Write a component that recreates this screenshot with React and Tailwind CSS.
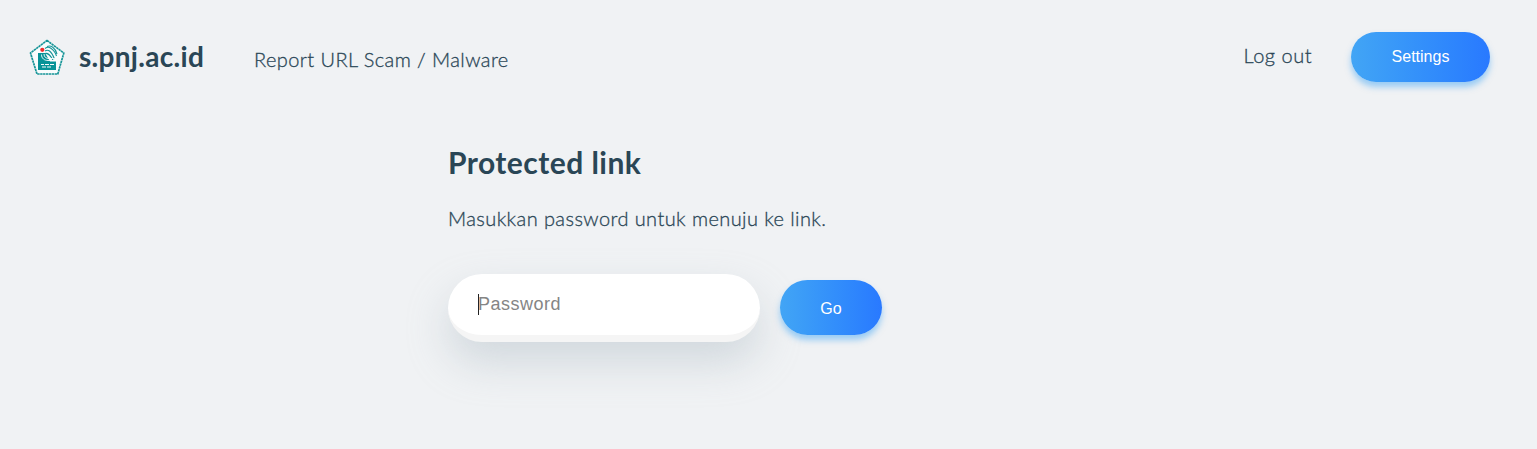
function Logo() {
  return (
    <svg viewBox="0 0 36 36" className="h-9 w-9 shrink-0" fill="none">
      <path d="M18 1.5 34.800 14 28.800 35H8L1.500 14Z" fill="#f8fcfc" stroke="#159497" strokeWidth="1.7" strokeDasharray="2.4 0.5" strokeLinejoin="round" />
      <path d="M9 14h7l5 8.500h6V31H9Z" fill="#079397" />
      <circle cx="13.300" cy="10.800" r="2.1" fill="#f02c2c" />
      <g stroke="#159497" strokeWidth="1.1">
        <path d="M16 9.500c2-1.500 4-1.500 5.500-.5s4.500 3 6 8" />
        <path d="M16 12c3-2 6-.5 9.500 8" />
        <path d="M16 14.500c3-1 5 1.500 8 6.500" />
        <path d="M18 7.500c4-1.500 8 1 10 7.500" />
      </g>
      <g stroke="#f8fcfc" strokeWidth="0.9">
        <path d="M12.500 15.500c0 4 3 6 6.500 6h8" />
        <path d="M15 15c0 3 2 4.500 5 4.500h6" />
        <path d="M12 25.500h3M16 25.500h4M21 25.500h4M13 28h4M18 28h4" strokeWidth="1.200" />
      </g>
    </svg>
  );
}

export default function App() {
  return (
    <div className="h-[449px] overflow-hidden bg-[#f0f2f4] font-['Lato',sans-serif] text-[#2a4656]">
      <header className="flex h-[102px] items-start justify-between pt-8 pr-[47px] pl-[29px]">
        <div className="flex">
          <a className="flex pt-[7px]">
            <Logo />
            <span className="-mt-px ml-[14px] w-[125px] text-[28px] leading-9 font-bold tracking-[0.3px] whitespace-nowrap">s.pnj.ac.id</span>
          </a>
          <a className="mt-[11px] ml-[50px] text-[20px] leading-8 font-light tracking-[0.42px] whitespace-nowrap [-webkit-text-stroke:0.3px_#2a4656]">Report URL Scam / Malware</a>
        </div>
        <div className="flex">
          <a className="mt-[7px] mr-[39px] text-[20px] leading-8 font-light tracking-[0.5px] whitespace-nowrap [-webkit-text-stroke:0.3px_#2a4656]">Log out</a>
          <button className="h-[50px] w-[139px] rounded-full bg-linear-to-r from-[#42a5f5] to-[#2979ff] font-['Liberation_Sans',sans-serif] text-[16px] text-white shadow-[0_5px_6px_rgba(66,165,245,0.5)]">
            Settings
          </button>
        </div>
      </header>
      <main className="ml-[448px] flex flex-col pt-[41px]">
        <h2 className="text-[30px] leading-[38px] font-bold tracking-[0.45px]">Protected link</h2>
        <p className="mt-[21px] text-[20px] leading-8 font-light tracking-[0.42px] [-webkit-text-stroke:0.3px_#2a4656]">Masukkan password untuk menuju ke link.</p>
        <form className="mt-[40px] flex">
          <div className="flex h-[68px] w-[312px] items-center rounded-[100px] border-b-[7px] border-[#f5f5f5] bg-white pl-[30px] font-['Liberation_Sans',sans-serif] text-[18px] tracking-[0.5px] text-[#858585] shadow-[0_20px_42px_hsla(200,15%,70%,0.42)]">
            <span className="-mr-px h-[21px] w-px bg-[#222]" />
            <span className="leading-[21px]">Password</span>
          </div>
          <button type="button" className="mt-[6px] ml-5 h-[55px] w-[102px] rounded-full bg-linear-to-r from-[#42a5f5] to-[#2979ff] pt-[2px] font-['Liberation_Sans',sans-serif] text-[16px] text-white shadow-[0_5px_6px_rgba(66,165,245,0.5)]">
            Go
          </button>
        </form>
      </main>
    </div>
  );
}
